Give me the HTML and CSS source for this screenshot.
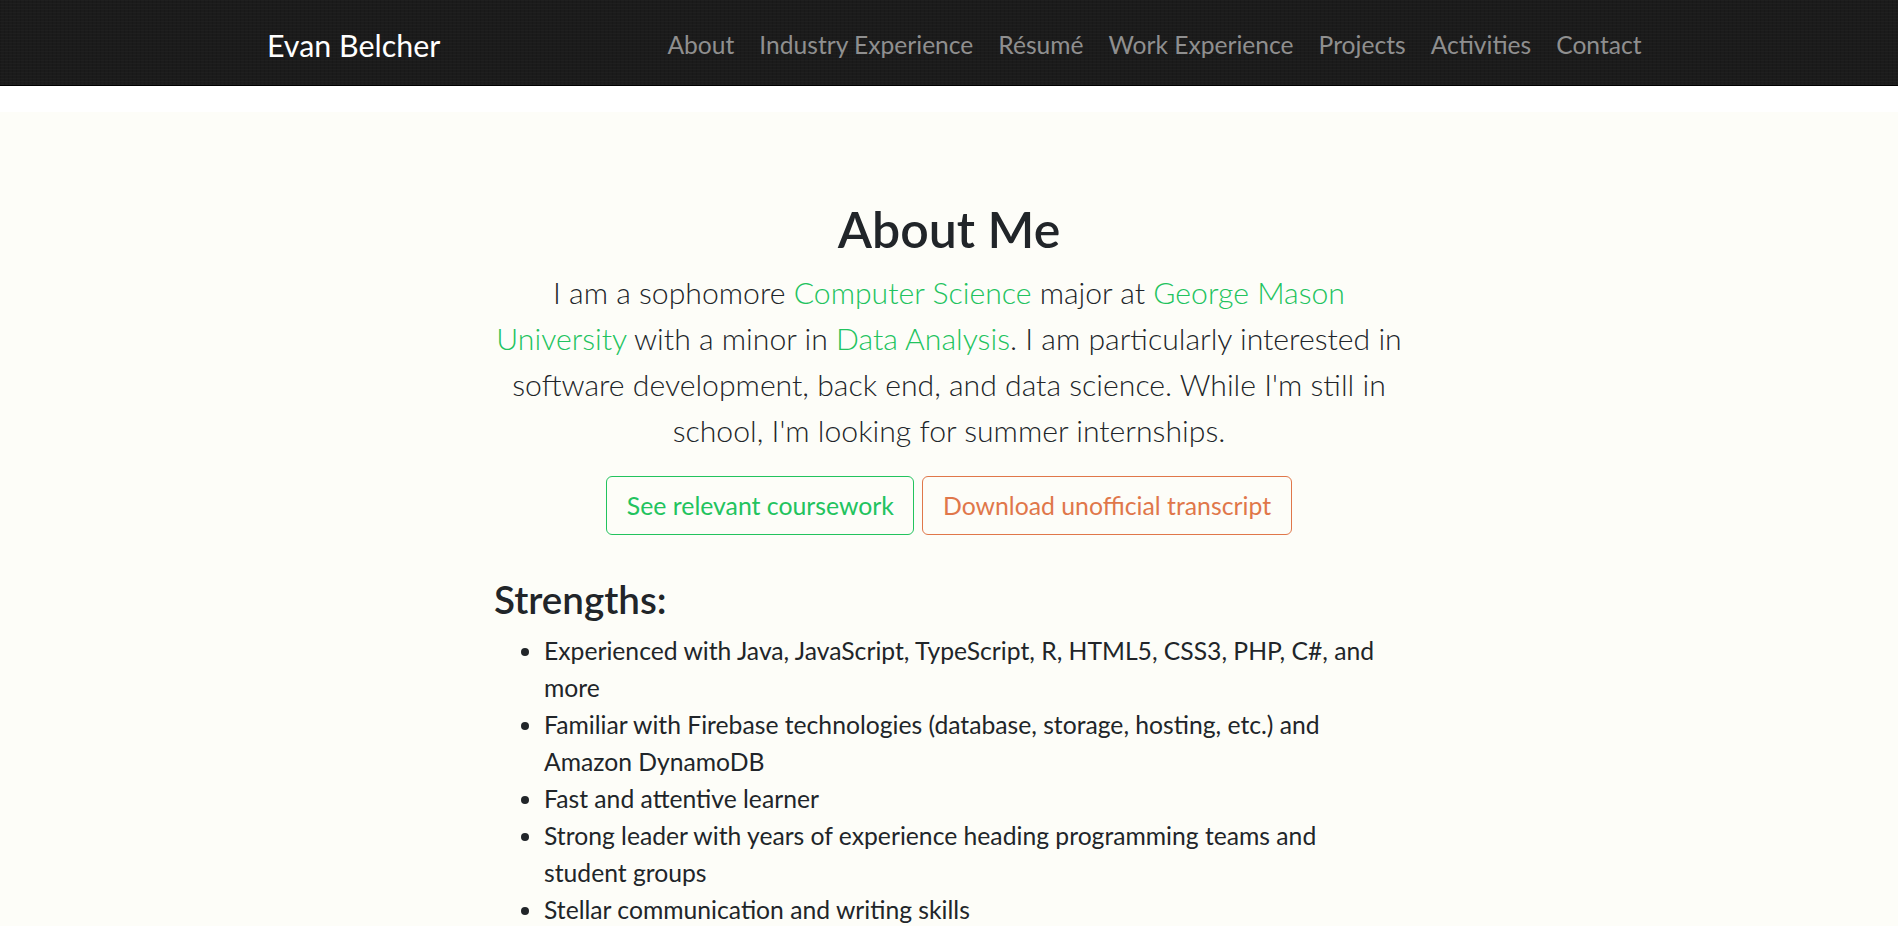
FILE: index.html
```html
<!DOCTYPE html>
<html lang="en">
<head>
<meta charset="utf-8">
<title>Evan Belcher</title>
<link rel="stylesheet" href="styles.css">
</head>
<body>
<nav class="navbar">
  <a class="brand" href="#">Evan Belcher</a>
  <ul class="nav-links">
    <li><a href="#">About</a></li>
    <li><a href="#">Industry Experience</a></li>
    <li><a href="#">Résumé</a></li>
    <li><a href="#">Work Experience</a></li>
    <li><a href="#">Projects</a></li>
    <li><a href="#">Activities</a></li>
    <li><a href="#">Contact</a></li>
  </ul>
</nav>
<main class="page">
  <section class="about">
    <h2 class="title">About Me</h2>
    <p class="lead">I am a sophomore <a href="#">Computer Science</a> major at <a href="#">George Mason University</a> with a minor in <a href="#">Data Analysis</a>. I am particularly interested in software development, back end, and data science. While I'm still in school, I'm looking for summer internships.</p>
    <div class="actions">
      <a class="btn btn-green" href="#">See relevant coursework</a>
      <a class="btn btn-orange" href="#">Download unofficial transcript</a>
    </div>
    <h3 class="subtitle">Strengths:</h3>
    <ul class="list">
      <li>Experienced with Java, JavaScript, TypeScript, R, HTML5, CSS3, PHP, C#, and more</li>
      <li>Familiar with Firebase technologies (database, storage, hosting, etc.) and Amazon DynamoDB</li>
      <li>Fast and attentive learner</li>
      <li>Strong leader with years of experience heading programming teams and student groups</li>
      <li>Stellar communication and writing skills</li>
    </ul>
  </section>
</main>
</body>
</html>
```

FILE: styles.css
```css
* { box-sizing: border-box; }
html, body { margin: 0; padding: 0; }
body {
  font-family: Lato, "Open Sans", sans-serif;
  font-size: 24.7px;
  line-height: 37px;
  color: #212529;
  background: #ffffff;
  overflow: hidden;
}
a { text-decoration: none; }

.navbar {
  display: flex;
  align-items: center;
  justify-content: space-between;
  height: 86px;
  padding: 4px 244px 0 267px;
  background-color: #1b1b1b;
  background-image:
    repeating-linear-gradient(0deg, rgba(255,255,255,0.018) 0 1px, transparent 1px 3px),
    repeating-linear-gradient(90deg, rgba(0,0,0,0.12) 0 1px, transparent 1px 4px);
  border-bottom: 1px solid #000;
}
.brand {
  color: #fff;
  font-size: 30.4px;
  line-height: 46px;
}
.nav-links {
  display: flex;
  list-style: none;
  margin: 0;
  padding: 0;
}
.nav-links a {
  display: block;
  padding: 0 12.5px;
  color: #8f8f8f;
  font-size: 24.6px;
  line-height: 37.5px;
}

.page {
  margin-top: 26px;
  padding-top: 87px;
  min-height: 814px;
  background: #fdfdf8;
}
.about {
  width: 910px;
  margin: 0 auto;
}
.title {
  margin: 0 0 10px;
  text-align: center;
  font-size: 50px;
  line-height: 60px;
  font-weight: 600;
}
.lead {
  margin: 0 -8px 23px;
  text-align: center;
  font-size: 30.2px;
  line-height: 46px;
  font-weight: 300;
}
.lead a { color: #22c35e; }
.actions {
  display: flex;
  justify-content: center;
  gap: 8px;
}
.btn {
  display: inline-block;
  padding: 9.5px 19.5px;
  border: 1px solid;
  border-radius: 6px;
  font-size: 24.8px;
  line-height: 37.5px;
}
.btn-green { color: #22c35e; border-color: #22c35e; }
.btn-orange { color: #e0774a; border-color: #e0774a; }

.subtitle {
  margin: 40px 0 9px;
  font-size: 38.6px;
  line-height: 48px;
  font-weight: 600;
}
.list {
  margin: 0;
  padding-left: 50px;
}
```
